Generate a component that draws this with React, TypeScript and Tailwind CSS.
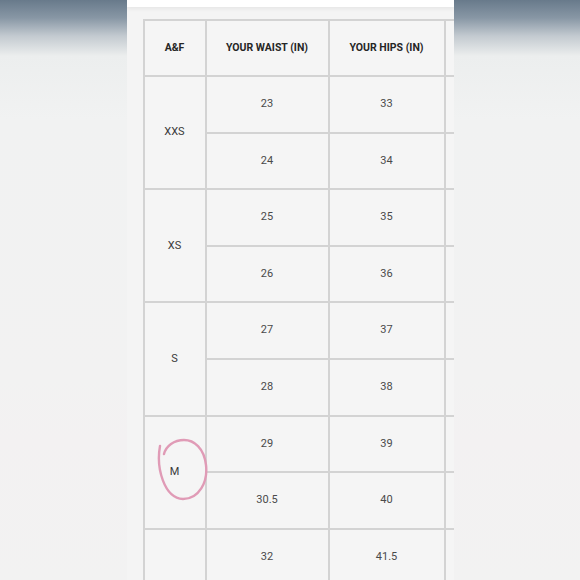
import React from 'react';

type SizeGroup = { size: string; rows: [string, string][] };

const groups: SizeGroup[] = [
  { size: 'XXS', rows: [['23', '33'], ['24', '34']] },
  { size: 'XS', rows: [['25', '35'], ['26', '36']] },
  { size: 'S', rows: [['27', '37'], ['28', '38']] },
  { size: 'M', rows: [['29', '39'], ['30.5', '40']] },
];

const cell = 'bg-[#f5f5f5] flex items-center justify-center text-center';

const Circle: React.FC = () => (
  <svg
    className="absolute pointer-events-none"
    style={{ left: -14, top: -27 }}
    width="60"
    height="66"
    viewBox="0 0 60 66"
    fill="none"
  >
    <path
      d="M2 6 C-2 28 6 58 25 59 C41 59 50 42 48 25 C46 8 36 0 26 0 C16 0 8 6 6 14"
      stroke="#e09bb6"
      strokeWidth="2.4"
      strokeLinecap="round"
      transform="translate(2 3)"
    />
  </svg>
);

const SizeTable: React.FC = () => (
  <div className="grid grid-cols-[60px_121px_114px_120px] auto-rows-[54.6px] grid-rows-[54px] gap-[2px] p-[2px] bg-[#d3d3d3] w-max">
    <div className={`${cell} font-bold text-[10.5px] text-[#262626]`}>A&amp;F</div>
    <div className={`${cell} font-bold text-[10.5px] text-[#262626]`}>YOUR WAIST (IN)</div>
    <div className={`${cell} font-bold text-[10.5px] text-[#262626]`}>YOUR HIPS (IN)</div>
    <div className={cell}></div>
    {groups.map((g) => (
      <React.Fragment key={g.size}>
        <div className={`${cell} row-span-2 text-[#3a3a3a]`}>
          <span className="relative">
            {g.size}
            {g.size === 'M' && <Circle />}
          </span>
        </div>
        {g.rows.map(([w, h], i) => (
          <React.Fragment key={i}>
            <div className={`${cell} text-[#4a4a4a]`}>{w}</div>
            <div className={`${cell} text-[#4a4a4a]`}>{h}</div>
            <div className={cell}></div>
          </React.Fragment>
        ))}
      </React.Fragment>
    ))}
    <div className={cell}></div>
    <div className={`${cell} text-[#4a4a4a]`}>32</div>
    <div className={`${cell} text-[#4a4a4a]`}>41.5</div>
    <div className={cell}></div>
  </div>
);

const Backdrop: React.FC = () => (
  <div className="flex-1 bg-[linear-gradient(to_bottom,#687a8b_0px,#8897a5_18px,#c3cad0_36px,#eceeee_56px,#f1f2f2_120px,#f2f2f2_380px,#f3f1f2_440px,#f2f2f2_580px)]" />
);

export default function App() {
  return (
    <div
      className="w-[580px] h-[580px] overflow-hidden flex text-[11px]"
      style={{ fontFamily: 'Roboto, "Liberation Sans", sans-serif' }}
    >
      <Backdrop />
      <div className="w-[327px] shrink-0 bg-[#f4f4f4] flex flex-col overflow-hidden">
        <div className="h-[7px] bg-white shadow-[0_2px_4px_rgba(0,0,0,0.06)] shrink-0" />
        <div className="pt-[12px] pl-[16px]">
          <SizeTable />
        </div>
      </div>
      <Backdrop />
    </div>
  );
}
